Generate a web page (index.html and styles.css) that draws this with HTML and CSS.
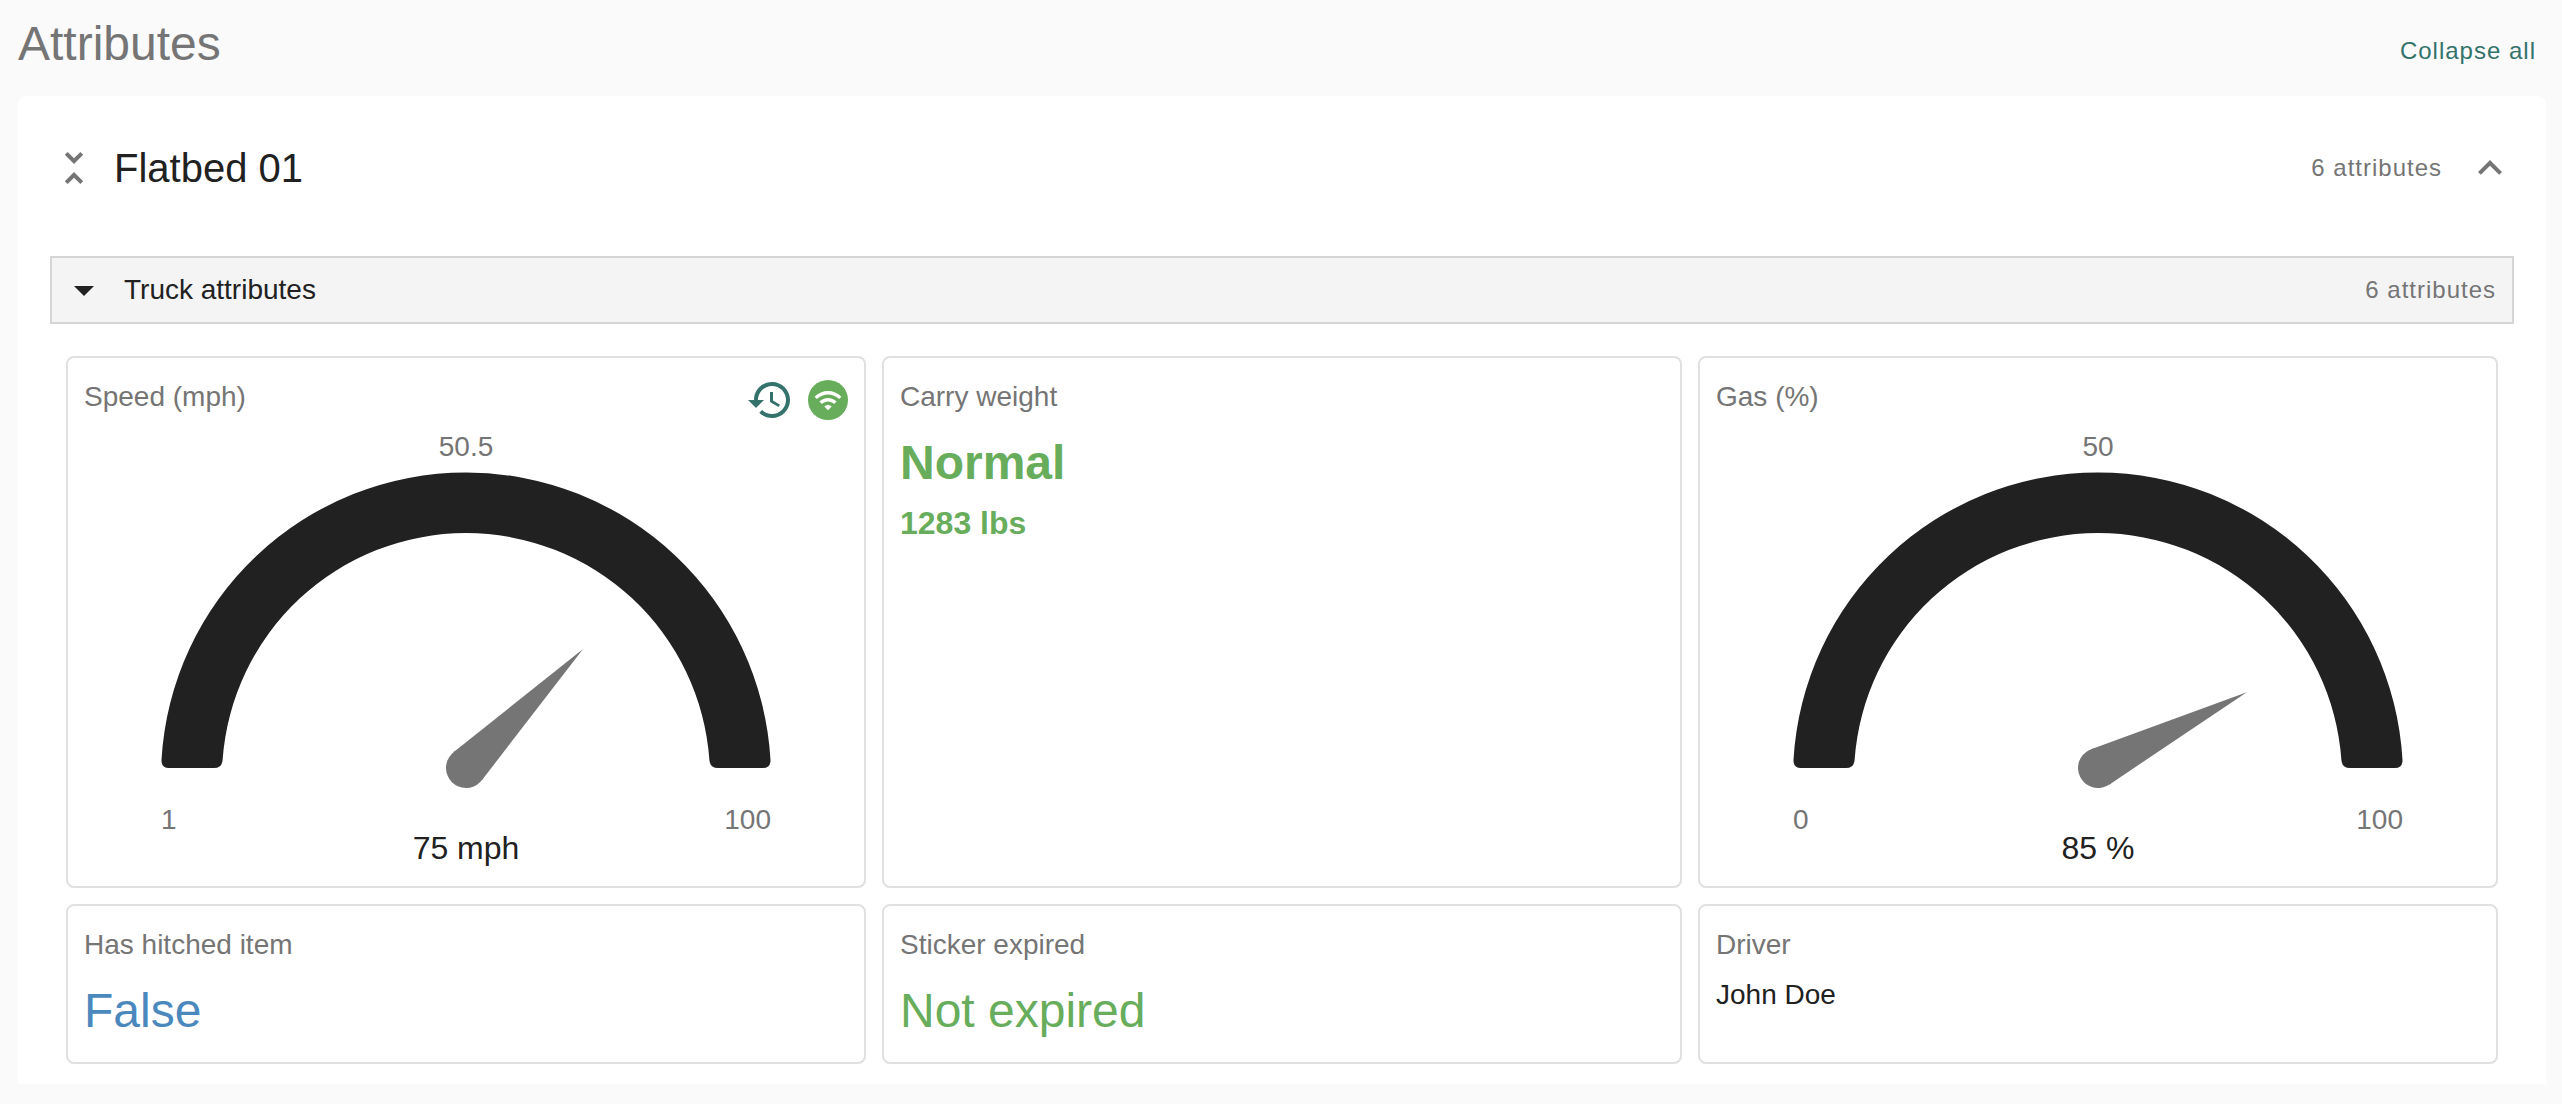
FILE: index.html
```html
<!DOCTYPE html>
<html lang="en">
<head>
    <meta charset="UTF-8">
    <meta name="viewport" content="width=device-width, initial-scale=1.0">
    <title>Attributes</title>
    <link rel="stylesheet" href="styles.css">
</head>
<body>
    <header class="page-header">
        <h1 class="page-title">Attributes</h1>
        <button class="collapse-all" type="button">Collapse all</button>
    </header>

    <main class="card">
        <div class="card-header">
            <button class="icon-button" type="button" aria-label="Collapse groups">
                <svg class="icon" viewBox="0 0 24 24"><path d="M7.41 18.59L8.83 20 12 16.83 15.17 20l1.41-1.41L12 14l-4.59 4.59zm9.18-13.18L15.17 4 12 7.17 8.83 4 7.41 5.41 12 10l4.59-4.59z"/></svg>
            </button>
            <h2 class="card-title">Flatbed 01</h2>
            <span class="count">6 attributes</span>
            <button class="icon-button card-toggle" type="button" aria-label="Collapse Flatbed 01">
                <svg class="icon" viewBox="0 0 24 24"><path d="M12 8l-6 6 1.41 1.41L12 10.83l4.59 4.58L18 14z"/></svg>
            </button>
        </div>

        <div class="group-header">
            <button class="icon-button dark" type="button" aria-label="Toggle truck attributes">
                <svg class="icon" viewBox="0 0 24 24"><path d="M7 10l5 5 5-5z"/></svg>
            </button>
            <h3 class="group-title">Truck attributes</h3>
            <span class="count">6 attributes</span>
        </div>

        <div class="tiles">
            <section class="tile">
                <div class="tile-header">
                    <h4 class="tile-title">Speed (mph)</h4>
                    <div class="tile-icons">
                        <button class="icon-button teal" type="button" aria-label="History">
                            <svg class="icon" viewBox="0 0 24 24"><path d="M13 3c-4.97 0-9 4.03-9 9H1l3.89 3.89.07.14L9 12H6c0-3.87 3.13-7 7-7s7 3.13 7 7-3.13 7-7 7c-1.93 0-3.68-.79-4.94-2.06l-1.42 1.42C8.27 19.99 10.51 21 13 21c4.97 0 9-4.03 9-9s-4.03-9-9-9zm-1 5v5l4.28 2.54.72-1.21-3.5-2.08V8H12z"/></svg>
                        </button>
                        <svg class="icon" viewBox="0 0 24 24" role="img" aria-label="Live">
                            <circle class="live-dot" cx="12" cy="12" r="10"/>
                            <path class="live-waves" transform="translate(4.64 4.8) scale(.6136)" d="M1 9l2 2c4.97-4.97 13.03-4.97 18 0l2-2C16.93 2.93 7.08 2.93 1 9zm8 8l3 3 3-3c-1.65-1.66-4.34-1.66-6 0zm-4-4l2 2c2.76-2.76 7.24-2.76 10 0l2-2C15.14 9.14 8.87 9.14 5 13z"/>
                        </svg>
                    </div>
                </div>
                <div class="gauge">
                    <span class="gauge-mid">50.5</span>
                    <svg class="gauge-dial" viewBox="0 0 610 316">
                        <path class="gauge-arc" d="M8 296Q.4 296 .5 288A305 305 0 0 1 609.5 288Q609.6 296 602 296L557 296Q549 296 548.4 288A244 244 0 0 0 61.6 288Q61 296 53 296Z"/>
                        <g class="gauge-needle" transform="translate(305 296) rotate(-45.5)">
                            <circle r="20"/>
                            <path d="M2.4 -19.9L167 0 2.4 19.9Z"/>
                        </g>
                    </svg>
                    <div class="gauge-range"><span>1</span><span>100</span></div>
                    <div class="gauge-value">75 mph</div>
                </div>
            </section>

            <section class="tile">
                <h4 class="tile-title">Carry weight</h4>
                <p class="value-large green bold">Normal</p>
                <p class="value-small green bold">1283 lbs</p>
            </section>

            <section class="tile">
                <h4 class="tile-title">Gas (%)</h4>
                <div class="gauge">
                    <span class="gauge-mid">50</span>
                    <svg class="gauge-dial" viewBox="0 0 610 316">
                        <path class="gauge-arc" d="M8 296Q.4 296 .5 288A305 305 0 0 1 609.5 288Q609.6 296 602 296L557 296Q549 296 548.4 288A244 244 0 0 0 61.6 288Q61 296 53 296Z"/>
                        <g class="gauge-needle" transform="translate(305 296) rotate(-27)">
                            <circle r="20"/>
                            <path d="M2.4 -19.9L167 0 2.4 19.9Z"/>
                        </g>
                    </svg>
                    <div class="gauge-range"><span>0</span><span>100</span></div>
                    <div class="gauge-value">85 %</div>
                </div>
            </section>

            <section class="tile">
                <h4 class="tile-title">Has hitched item</h4>
                <p class="value-large blue">False</p>
            </section>

            <section class="tile">
                <h4 class="tile-title">Sticker expired</h4>
                <p class="value-large green">Not expired</p>
            </section>

            <section class="tile">
                <h4 class="tile-title">Driver</h4>
                <p class="value-text">John Doe</p>
            </section>
        </div>
    </main>
</body>
</html>
```
FILE: styles.css
```css
* {
    box-sizing: border-box;
}

body {
    margin: 0;
    padding: 0 16px 20px 18px;
    background: #fafafa;
    color: #212121;
    font-family: "Liberation Sans", Arial, sans-serif;
    font-size: 28px;
    line-height: 42px;
}

h1, h2, h3, h4, p {
    margin: 0;
    font-weight: 400;
}

button {
    padding: 0;
    border: 0;
    background: none;
    font: inherit;
    cursor: pointer;
}

.page-header {
    display: flex;
    align-items: flex-end;
    justify-content: space-between;
    padding: 16px 10px 24px 0;
}

.page-title {
    color: #757575;
    font-size: 48px;
    line-height: 56px;
}

.collapse-all {
    color: #33736b;
    font-size: 24px;
    line-height: 42px;
    letter-spacing: 1px;
}

.card {
    padding: 0 32px 20px;
    background: #fff;
    border-radius: 8px 8px 0 0;
}

.card-header {
    display: flex;
    align-items: center;
    padding: 48px 0;
    margin-bottom: 16px;
}

.card-title {
    margin-left: 16px;
    font-size: 40px;
    line-height: 40px;
}

.count {
    margin-left: auto;
    color: #757575;
    font-size: 24px;
    line-height: 36px;
    letter-spacing: 1px;
}

.card-toggle {
    margin-left: 24px;
}

.icon-button {
    display: block;
    color: #757575;
}

.icon {
    display: block;
    width: 48px;
    height: 48px;
    fill: currentColor;
}

.dark {
    color: #212121;
}

.teal {
    color: #33736b;
}

.group-header {
    display: flex;
    align-items: center;
    padding: 8px 16px 8px 8px;
    background: #f4f4f4;
    border: 2px solid #d5d5d5;
}

.group-title {
    margin-left: 16px;
    font-size: 28px;
}

.tiles {
    display: grid;
    grid-template-columns: repeat(3, 1fr);
    gap: 16px;
    padding: 32px 16px 0;
}

.tile {
    padding: 18px 16px;
    border: 2px solid #e0e0e0;
    border-radius: 8px;
}

/* icons are taller than the title line and hang below it */
.tile-header {
    display: flex;
    justify-content: space-between;
    height: 42px;
}

.tile-title {
    color: #757575;
    font-size: 28px;
}

.tile-icons {
    display: flex;
    align-items: flex-start;
    gap: 10px;
    margin-right: -4px;
}

.live-dot {
    fill: #67ad5b;
}

.live-waves {
    fill: #fff;
}

.value-large {
    margin-top: 12px;
    font-size: 48px;
    line-height: 66px;
}

.value-small {
    margin-top: 4px;
    font-size: 32px;
    line-height: 46px;
}

.value-text {
    margin-top: 8px;
}

.bold {
    font-weight: 700;
}

.green {
    color: #67ad5b;
}

.blue {
    color: #4a88bd;
}

.gauge {
    display: flex;
    flex-direction: column;
    align-items: center;
    padding: 8px 0 6px;
}

.gauge-mid {
    color: #757575;
}

.gauge-dial {
    display: block;
    width: 100%;
    max-width: 610px;
    margin-top: 4px;
}

.gauge-arc {
    fill: #212121;
}

.gauge-needle {
    fill: #757575;
}

.gauge-range {
    display: flex;
    justify-content: space-between;
    width: 100%;
    max-width: 610px;
    margin-top: 18px;
    color: #757575;
    line-height: 28px;
}

.gauge-value {
    font-size: 32px;
    line-height: 28px;
}
```
